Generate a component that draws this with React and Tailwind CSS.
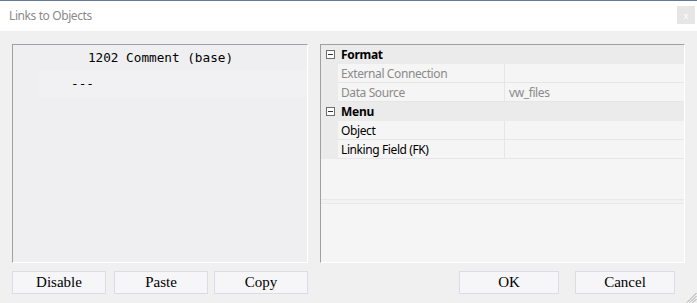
import React from "react";

const ui = { fontFamily: '"Noto Sans", "Open Sans", sans-serif' };
const serif = { fontFamily: '"Liberation Serif", "Times New Roman", serif' };
const mono = { fontFamily: '"DejaVu Sans Mono", "Liberation Mono", monospace' };

function Minus() {
  return (
    <span className="w-[9px] h-[9px] border border-[#6e6e6e] bg-white flex items-center justify-center">
      <span className="w-[5px] h-px bg-[#333]" />
    </span>
  );
}

function Category({ label }) {
  return (
    <div className="h-[19px] flex items-center bg-[#ebebeb] border-b border-[#ebebeb]">
      <div className="w-[17px] flex items-center justify-center pl-[1px]">
        <Minus />
      </div>
      <span className="pl-[3px] pt-[2px] text-[12px] tracking-[-0.3px] font-bold text-black leading-none">{label}</span>
    </div>
  );
}

function Prop({ label, value, disabled }) {
  const c = disabled ? "text-[#8a8a8a]" : "text-black";
  return (
    <div className="h-[19px] flex">
      <div className="w-[17px] bg-[#ebebeb]" />
      <div className={`w-[167px] flex items-center pl-[3px] pt-[2px] bg-[#f5f5f5] border-b border-r border-[#e6e6e6] text-[12px] tracking-[-0.4px] leading-none ${c}`}>
        {label}
      </div>
      <div className={`flex-1 flex items-center pl-[4px] pt-[2px] bg-[#f5f5f5] border-b border-[#e6e6e6] text-[12px] tracking-[-0.4px] leading-none ${c}`}>
        {value}
      </div>
    </div>
  );
}

function Btn({ children, w }) {
  return (
    <div
      className={`${w} h-[23px] bg-[#f6f6f8] border border-[#dcdce4] flex items-center justify-center text-[15px] text-black leading-none`}
      style={serif}
    >
      {children}
    </div>
  );
}

export default function App() {
  return (
    <div className="w-[697px] h-[303px] bg-[#f0f0f0] relative overflow-hidden flex flex-col" style={ui}>
      <div className="h-px bg-[#66789a]" />
      <div className="h-[30px] bg-white flex items-center justify-between pl-[9px] pr-[2px]">
        <span className="text-[12px] tracking-[-0.4px] text-[#8a8a8a] leading-none">Links to Objects</span>
        <div className="w-[18px] h-[18px] bg-[#e6e6e6] flex items-center justify-center text-[9px] text-white leading-none -mt-[2px]">
          x
        </div>
      </div>

      <div className="flex gap-[12px] pl-[12px] pt-[13px]">
        <div className="w-[296px] h-[219px] border-t border-l border-[#a0a0a0] border-r border-b border-r-white border-b-white bg-[#efeff2] flex flex-col">
          <div className="h-[25px] flex items-center justify-center text-[12.7px] text-black leading-none pl-[1px] pt-[2px]" style={mono}>
            1202 Comment (base)
          </div>
          <div className="ml-[25px] h-[27px] bg-[#f1f1f4] flex items-center pl-[33px] pt-[2px] text-[12.7px] text-black leading-none" style={mono}>
            ---
          </div>
        </div>

        <div className="w-[365px] h-[219px] border-t border-l border-[#a0a0a0] border-r border-b border-r-white border-b-white bg-[#f5f5f5] flex flex-col">
          <Category label="Format" />
          <Prop label="External Connection" value="" disabled />
          <Prop label="Data Source" value="vw_files" disabled />
          <Category label="Menu" />
          <Prop label="Object" value="" />
          <Prop label="Linking Field (FK)" value="" />
          <div className="h-[41px] border-b border-[#e9e9e9]" />
          <div className="h-[3px] bg-[#f2f2f2]" />
          <div className="flex-1 border-t border-[#e9e9e9] bg-[#f5f5f5]" />
        </div>
      </div>

      <div className="flex pl-[12px] pt-[8px]">
        <Btn w="w-[94px]">Disable</Btn>
        <div className="w-[8px]" />
        <Btn w="w-[94px]">Paste</Btn>
        <div className="w-[6px]" />
        <Btn w="w-[94px]">Copy</Btn>
        <div className="w-[151px]" />
        <Btn w="w-[100px]">OK</Btn>
        <div className="w-[16px]" />
        <Btn w="w-[100px]">Cancel</Btn>
      </div>

      <svg className="absolute right-0 bottom-0" width="12" height="12" viewBox="0 0 12 12">
        <g stroke="#a8a8a8" strokeWidth="1">
          <line x1="11.5" y1="2" x2="2" y2="11.5" />
          <line x1="11.5" y1="5" x2="5" y2="11.5" />
          <line x1="11.5" y1="8" x2="8" y2="11.5" />
        </g>
      </svg>
    </div>
  );
}
